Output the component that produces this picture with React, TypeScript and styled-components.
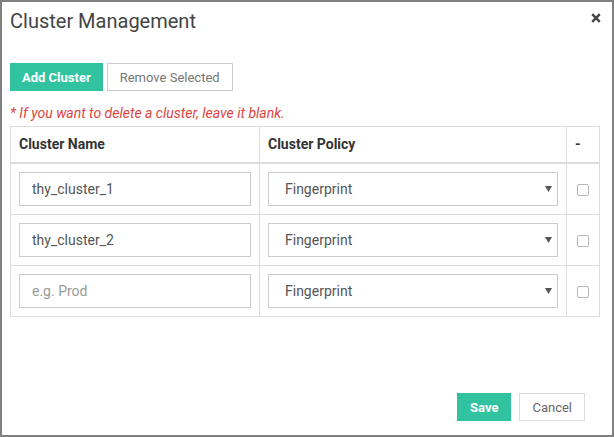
import React from 'react';
import styled, { createGlobalStyle } from 'styled-components';

const GlobalStyle = createGlobalStyle`
  html, body {
    margin: 0;
    padding: 0;
    background: #ffffff;
  }
  body {
    font-family: Roboto, "Liberation Sans", Arial, sans-serif;
  }
  * {
    box-sizing: border-box;
  }
`;

const Modal = styled.div`
  width: 614px;
  height: 437px;
  border: 2px solid #808080;
  background: #ffffff;
  display: flex;
  flex-direction: column;
`;

const Header = styled.div`
  display: flex;
  justify-content: space-between;
  align-items: flex-start;
  padding: 8px 11px 0 8px;
`;

const Title = styled.h4`
  margin: 0;
  font-size: 20px;
  line-height: 22px;
  font-weight: 400;
  color: #444444;
`;

const CloseButton = styled.button`
  border: none;
  background: none;
  padding: 0;
  margin-top: 3px;
  width: 10px;
  height: 10px;
  display: flex;
  cursor: pointer;
`;

const Body = styled.div`
  padding: 0 11px 0 8px;
`;

const Toolbar = styled.div`
  display: flex;
  gap: 4px;
  margin-top: 31px;
`;

const Button = styled.button<{ $primary?: boolean }>`
  height: 28px;
  padding: 0 ${p => (p.$primary ? '11px' : '12px')};
  font-family: Roboto, "Liberation Sans", Arial, sans-serif;
  font-size: 13px;
  font-weight: ${p => (p.$primary ? 700 : 400)};
  color: ${p => (p.$primary ? '#ffffff' : '#777777')};
  background: ${p => (p.$primary ? '#31c3a0' : '#ffffff')};
  border: 1px solid ${p => (p.$primary ? '#31c3a0' : '#cccccc')};
  border-radius: 0;
  cursor: pointer;
`;

const Note = styled.div`
  margin-top: 12px;
  font-size: 14px;
  line-height: 20px;
  font-style: italic;
  color: #df4540;
`;

const Table = styled.table`
  margin-top: 3px;
  width: 590px;
  border-collapse: collapse;
  border: 1px solid #dddddd;
`;

const Th = styled.th<{ $narrow?: boolean }>`
  border: 1px solid #dddddd;
  border-bottom-width: 2px;
  padding: 8px 8px;
  height: 36px;
  text-align: left;
  font-size: 14px;
  font-weight: 700;
  color: #333333;
  width: ${p => (p.$narrow ? '33px' : 'auto')};
`;

const Td = styled.td<{ $center?: boolean }>`
  border: 1px solid #dddddd;
  padding: 8px;
  height: 51px;
  text-align: ${p => (p.$center ? 'center' : 'left')};
  vertical-align: middle;
`;

const TextInput = styled.input`
  display: block;
  width: 232px;
  height: 34px;
  padding: 0 12px;
  border: 1px solid #cccccc;
  border-radius: 0;
  font-family: Roboto, "Liberation Sans", Arial, sans-serif;
  font-size: 14px;
  color: #555555;
  outline: none;

  &::placeholder {
    color: #999999;
  }
`;

const SelectWrap = styled.div`
  position: relative;
  width: 290px;
`;

const Select = styled.select`
  display: block;
  width: 100%;
  height: 34px;
  padding: 0 16px;
  appearance: none;
  -webkit-appearance: none;
  border: 1px solid #cccccc;
  border-radius: 0;
  background: #ffffff;
  font-family: Roboto, "Liberation Sans", Arial, sans-serif;
  font-size: 14px;
  color: #555555;
  outline: none;
`;

const Arrow = styled.svg`
  position: absolute;
  right: 6px;
  top: 14px;
  pointer-events: none;
`;

const Check = styled.input`
  appearance: none;
  -webkit-appearance: none;
  width: 12px;
  height: 12px;
  margin: 0;
  border: 1px solid #b8b8b8;
  border-radius: 2px;
  background: #ffffff;
  vertical-align: middle;
`;

const Footer = styled.div`
  margin-top: auto;
  display: flex;
  justify-content: flex-end;
  gap: 8px;
  padding: 0 27px 14px 0;
`;

const FooterButton = styled(Button)`
  color: ${p => (p.$primary ? '#ffffff' : '#666666')};
  border-color: ${p => (p.$primary ? '#31c3a0' : '#dddddd')};
  padding: 0 12px;
`;

const rows = [
  { name: 'thy_cluster_1', policy: 'Fingerprint' },
  { name: 'thy_cluster_2', policy: 'Fingerprint' },
  { name: '', policy: 'Fingerprint' },
];

export default function App() {
  return (
    <>
      <GlobalStyle />
      <Modal>
        <Header>
          <Title>Cluster Management</Title>
          <CloseButton aria-label="Close">
            <svg width="10" height="10" viewBox="0 0 10 10">
              <path d="M1.2 1.2 L8.8 8.8 M8.8 1.2 L1.2 8.8" stroke="#444" strokeWidth="2.4" />
            </svg>
          </CloseButton>
        </Header>
        <Body>
          <Toolbar>
            <Button $primary>Add Cluster</Button>
            <Button>Remove Selected</Button>
          </Toolbar>
          <Note>* If you want to delete a cluster, leave it blank.</Note>
          <Table>
            <thead>
              <tr>
                <Th>Cluster Name</Th>
                <Th>Cluster Policy</Th>
                <Th $narrow>-</Th>
              </tr>
            </thead>
            <tbody>
              {rows.map((r, i) => (
                <tr key={i}>
                  <Td>
                    <TextInput defaultValue={r.name} placeholder="e.g. Prod" />
                  </Td>
                  <Td>
                    <SelectWrap>
                      <Select defaultValue={r.policy}>
                        <option>Fingerprint</option>
                      </Select>
                      <Arrow width="7" height="6" viewBox="0 0 7 6">
                        <path d="M0 0 H7 L3.5 6 Z" fill="#555" />
                      </Arrow>
                    </SelectWrap>
                  </Td>
                  <Td $center>
                    <Check type="checkbox" />
                  </Td>
                </tr>
              ))}
            </tbody>
          </Table>
        </Body>
        <Footer>
          <FooterButton $primary>Save</FooterButton>
          <FooterButton>Cancel</FooterButton>
        </Footer>
      </Modal>
    </>
  );
}
